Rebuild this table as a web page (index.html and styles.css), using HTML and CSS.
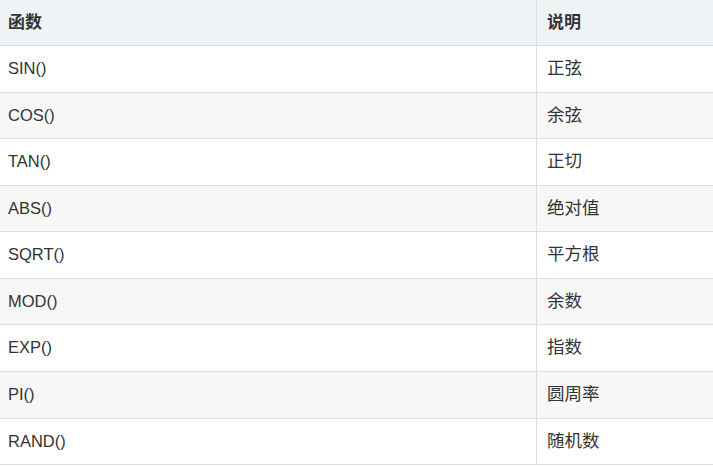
FILE: index.html
```html
<!DOCTYPE html>
<html lang="zh">
<head>
<meta charset="utf-8">
<link rel="stylesheet" href="styles.css">
</head>
<body>
<table class="fn-table">
  <thead>
    <tr><th class="c1">函数</th><th class="c2">说明</th></tr>
  </thead>
  <tbody>
    <tr><td class="c1">SIN()</td><td class="c2">正弦</td></tr>
    <tr><td class="c1">COS()</td><td class="c2">余弦</td></tr>
    <tr><td class="c1">TAN()</td><td class="c2">正切</td></tr>
    <tr><td class="c1">ABS()</td><td class="c2">绝对值</td></tr>
    <tr><td class="c1">SQRT()</td><td class="c2">平方根</td></tr>
    <tr><td class="c1">MOD()</td><td class="c2">余数</td></tr>
    <tr><td class="c1">EXP()</td><td class="c2">指数</td></tr>
    <tr><td class="c1">PI()</td><td class="c2">圆周率</td></tr>
    <tr><td class="c1">RAND()</td><td class="c2">随机数</td></tr>
  </tbody>
</table>
</body>
</html>
```

FILE: styles.css
```css
html, body {
  margin: 0;
  padding: 0;
  background: #ffffff;
}
body {
  font-family: "Liberation Sans", "Noto Sans CJK SC", Arial, sans-serif;
  font-size: 16.5px;
  color: #333333;
}
.fn-table {
  border-collapse: collapse;
  width: 713px;
  table-layout: fixed;
}
.fn-table th,
.fn-table td {
  text-align: left;
  padding: 12px 8px 12px 8px;
  line-height: 21.56px;
  border-bottom: 1px solid #dddddd;
  vertical-align: middle;
}
.fn-table th {
  background: #eff3f6;
  font-weight: bold;
  font-size: 17px;
  line-height: 21px;
  color: #333333;
}
.fn-table .c1 {
  width: 520px;
  border-right: 1px solid #dddddd;
}
.fn-table .c2 {
  padding-left: 10px;
  font-size: 17.5px;
}
.fn-table th.c2 {
  font-size: 17px;
}
.fn-table tbody tr:nth-child(even) td {
  background: #f7f7f7;
}
```
